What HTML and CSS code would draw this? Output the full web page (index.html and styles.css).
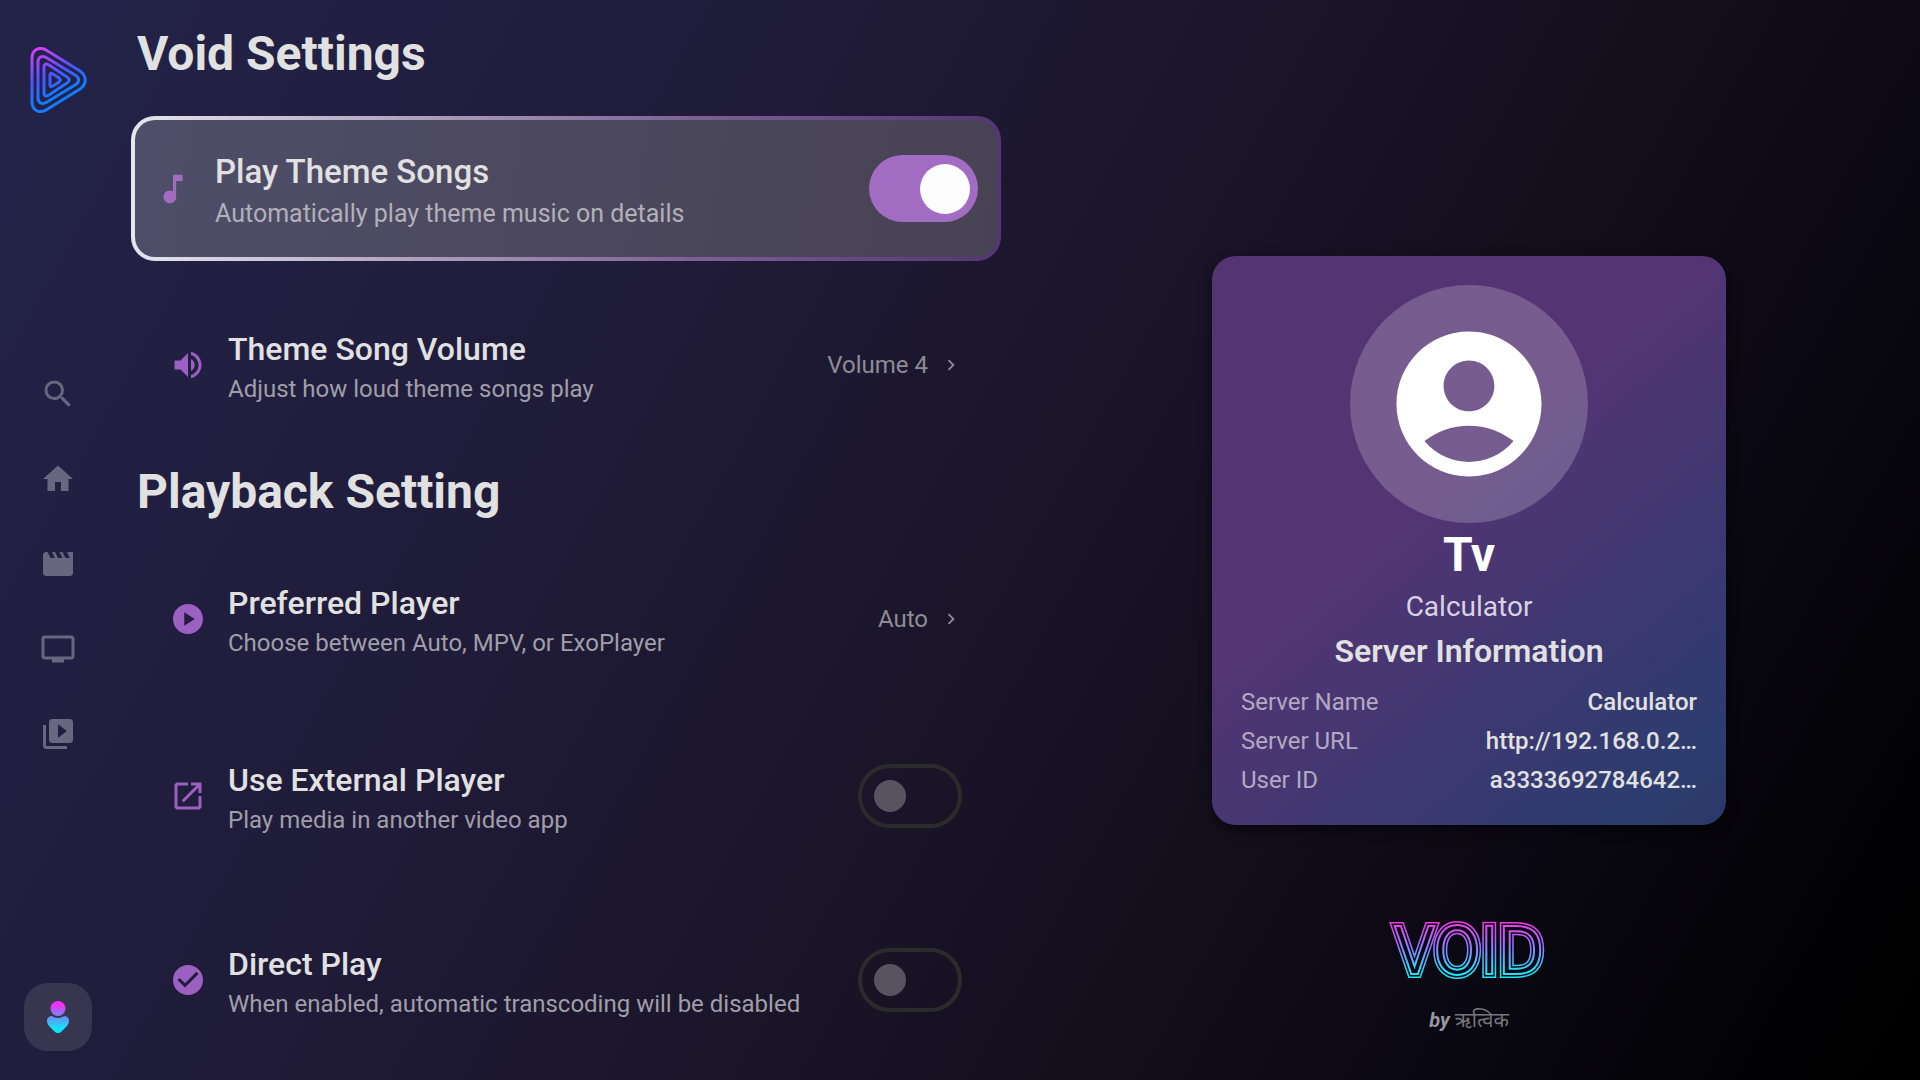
FILE: index.html
```
<!DOCTYPE html>
<html lang="en">
<head>
  <meta charset="UTF-8">
  <meta name="viewport" content="width=device-width, initial-scale=1">
  <title>Void Settings</title>
  <link rel="stylesheet" href="styles.css">
</head>
<body>
  <div class="app">
    <!-- Navigation rail -->
    <aside class="sidebar">
      <svg class="logo" viewBox="0 0 57 66" fill="none" stroke="url(#logoGradient)" stroke-width="3" stroke-linejoin="round">
        <defs>
          <linearGradient id="logoGradient" gradientUnits="userSpaceOnUse" x1="8" y1="2" x2="28" y2="48">
            <stop offset="0" stop-color="#d63df5"/>
            <stop offset="0.6" stop-color="#4a56ff"/>
            <stop offset="1" stop-color="#127cff"/>
          </linearGradient>
        </defs>
        <path d="M2 11C2 3 9 -1 16 3L50 24C57 29 57 37 50 42L16 63C9 67 2 63 2 55Z"/>
        <path d="M8 15C8 10 12 8 17 11L45 28C50 31 50 35 45 38L17 55C12 58 8 56 8 51Z"/>
        <path d="M14 20C14 17 16 16 19 18L37 30C40 32 40 34 37 36L19 48C16 50 14 49 14 46Z"/>
        <path d="M20 28C20 26 21 26 23 27L29 31C31 33 31 33 29 35L23 39C21 40 20 40 20 38Z"/>
      </svg>
      <nav class="nav">
        <button type="button" aria-label="Search"><svg viewBox="0 0 24 24"><path d="M15.5 14h-.79l-.28-.27A6.471 6.471 0 0 0 16 9.5 6.5 6.5 0 1 0 9.5 16c1.61 0 3.09-.59 4.23-1.57l.27.28v.79l5 4.99L20.49 19l-4.99-5zm-6 0C7.01 14 5 11.99 5 9.5S7.01 5 9.5 5 14 7.01 14 9.5 11.99 14 9.5 14z"/></svg></button>
        <button type="button" aria-label="Home"><svg viewBox="0 0 24 24"><path d="M10 20v-6h4v6h5v-8h3L12 3 2 12h3v8z"/></svg></button>
        <button type="button" aria-label="Movies"><svg viewBox="0 0 24 24"><path d="M18 4l2 4h-3l-2-4h-2l2 4h-3l-2-4H8l2 4H7L5 4H4c-1.1 0-1.99.9-1.99 2L2 18c0 1.1.9 2 2 2h16c1.100 0 2-.9 2-2V4h-4z"/></svg></button>
        <button type="button" aria-label="TV shows"><svg viewBox="0 0 24 24"><path d="M21 3H3c-1.100 0-2 .9-2 2v12c0 1.100.9 2 2 2h5v2h8v-2h5c1.100 0 1.990-.9 1.990-2L23 5c0-1.100-.9-2-2-2zm0 14H3V5h18v12z"/></svg></button>
        <button type="button" aria-label="Library"><svg viewBox="0 0 24 24"><path d="M4 6H2v14c0 1.100.9 2 2 2h14v-2H4V6zm16-4H8c-1.100 0-2 .9-2 2v12c0 1.100.9 2 2 2h12c1.100 0 2-.9 2-2V4c0-1.100-.9-2-2-2zm-8 12.500v-9l6 4.500-6 4.500z"/></svg></button>
      </nav>
      <button class="avatar" type="button" aria-label="Profile">
        <svg viewBox="0 0 22 32">
          <defs>
            <linearGradient id="avatarGradient" gradientUnits="userSpaceOnUse" x1="0" y1="0" x2="0" y2="32">
              <stop offset="0.1" stop-color="#f52df5"/>
              <stop offset="0.5" stop-color="#6a90f5"/>
              <stop offset="0.85" stop-color="#0fe4fa"/>
            </linearGradient>
          </defs>
          <g fill="url(#avatarGradient)">
            <circle cx="11" cy="7.500" r="7.500"/>
            <path d="M5 15C8 17.500 14 17.500 17 15C20 15 22 17 22 20C22 22 21 24 19 26L14 31C12 32.400 10 32.400 8 31L3 26C1 24 0 22 0 20C0 17 2 15 5 15Z"/>
          </g>
        </svg>
      </button>
    </aside>

    <!-- Settings list -->
    <main class="settings">
      <h1>Void Settings</h1>
      <div class="rows">
        <label class="row focused">
          <svg class="icon" viewBox="0 0 24 24"><path d="M12 3v10.550c-.59-.34-1.270-.55-2-.55-2.210 0-4 1.790-4 4s1.790 4 4 4 4-1.790 4-4V7h4V3h-6z"/></svg>
          <span class="text">
            <span class="title">Play Theme Songs</span>
            <span class="sub">Automatically play theme music on details</span>
          </span>
          <input class="switch" type="checkbox" checked>
        </label>
        <button class="row link" type="button">
          <svg class="icon" viewBox="0 0 24 24"><path d="M3 9v6h4l5 5V4L7 9H3zm13.500 3c0-1.770-1.020-3.290-2.500-4.030v8.050c1.480-.73 2.500-2.250 2.500-4.020zM14 3.230v2.060c2.890.86 5 3.540 5 6.710s-2.110 5.850-5 6.710v2.060c4.010-.91 7-4.490 7-8.770s-2.990-7.860-7-8.770z"/></svg>
          <span class="text">
            <span class="title">Theme Song Volume</span>
            <span class="sub">Adjust how loud theme songs play</span>
          </span>
          <span class="value">Volume 4</span>
          <svg class="chevron" viewBox="0 0 24 24"><path d="M8.590 16.590L13.170 12 8.590 7.410 10 6l6 6-6 6z"/></svg>
        </button>
      </div>

      <h2>Playback Setting</h2>
      <div class="rows">
        <button class="row link" type="button">
          <svg class="icon" viewBox="0 0 24 24"><path d="M12 2C6.480 2 2 6.480 2 12s4.480 10 10 10 10-4.480 10-10S17.520 2 12 2zm-2.500 14.500v-9l7 4.500-7 4.500z"/></svg>
          <span class="text">
            <span class="title">Preferred Player</span>
            <span class="sub">Choose between Auto, MPV, or ExoPlayer</span>
          </span>
          <span class="value">Auto</span>
          <svg class="chevron" viewBox="0 0 24 24"><path d="M8.590 16.590L13.170 12 8.590 7.410 10 6l6 6-6 6z"/></svg>
        </button>
        <label class="row">
          <svg class="icon" viewBox="0 0 24 24"><path d="M19 19H5V5h7V3H5c-1.110 0-2 .9-2 2v14c0 1.100.89 2 2 2h14c1.100 0 2-.9 2-2v-7h-2v7zM14 3v2h3.590l-9.830 9.830 1.410 1.410L19 6.410V10h2V3h-7z"/></svg>
          <span class="text">
            <span class="title">Use External Player</span>
            <span class="sub">Play media in another video app</span>
          </span>
          <input class="switch" type="checkbox">
        </label>
        <label class="row">
          <svg class="icon" viewBox="0 0 24 24"><path d="M12 2C6.480 2 2 6.480 2 12s4.480 10 10 10 10-4.480 10-10S17.520 2 12 2zm-2 15l-5-5 1.410-1.410L10 14.170l7.590-7.590L19 8l-9 9z"/></svg>
          <span class="text">
            <span class="title">Direct Play</span>
            <span class="sub">When enabled, automatic transcoding will be disabled</span>
          </span>
          <input class="switch" type="checkbox">
        </label>
      </div>
    </main>

    <!-- Profile and server card -->
    <section class="panel">
      <div class="card">
        <div class="portrait">
          <svg viewBox="0 0 24 24"><path d="M12 2C6.480 2 2 6.480 2 12s4.480 10 10 10 10-4.480 10-10S17.520 2 12 2zm0 4c1.930 0 3.500 1.570 3.500 3.500S13.930 13 12 13s-3.500-1.570-3.500-3.500S10.070 6 12 6zm0 14c-2.030 0-4.430-.82-6.140-2.880C7.550 15.800 9.680 15 12 15s4.450.8 6.140 2.120C16.430 19.180 14.030 20 12 20z"/></svg>
        </div>
        <div class="user">Tv</div>
        <div class="server">Calculator</div>
        <h3>Server Information</h3>
        <dl class="info">
          <div><dt>Server Name</dt><dd>Calculator</dd></div>
          <div><dt>Server URL</dt><dd>http://192.168.0.2…</dd></div>
          <div><dt>User ID</dt><dd>a3333692784642…</dd></div>
        </dl>
      </div>
      <div class="brand">
        <svg class="wordmark" viewBox="0 0 180 100" role="img" aria-label="VOID">
          <defs>
            <linearGradient id="voidGradient" gradientUnits="userSpaceOnUse" x1="0" y1="22" x2="0" y2="80">
              <stop offset="0" stop-color="#fa35e0"/>
              <stop offset="0.45" stop-color="#9278ff"/>
              <stop offset="0.9" stop-color="#1ee4fa"/>
            </linearGradient>
          </defs>
          <!-- Stacked strokes leave thin concentric lines -->
          <g text-anchor="middle">
            <text class="line outer" x="90" y="76">VOID</text>
            <text class="line gap" x="90" y="76">VOID</text>
            <text class="line inner" x="90" y="76">VOID</text>
          </g>
        </svg>
        <p class="byline">by <span>ऋत्विक</span></p>
      </div>
    </section>
  </div>
</body>
</html>
```
FILE: styles.css
```
* {
  box-sizing: border-box;
}

body {
  margin: 0;
  font-family: Roboto, "Noto Sans", sans-serif;
  font-size: 24px;
  line-height: 32px;
  color: #e1e1e1;
  background: #000;
}

button {
  font: inherit;
  color: inherit;
  background: none;
  border: none;
  padding: 0;
  cursor: pointer;
}

svg {
  display: block;
  fill: currentColor;
}

h1, h2, h3, p, dl, dd {
  margin: 0;
}

.app {
  display: grid;
  grid-template-columns: 116px 1fr 1fr;
  min-height: 100vh;
  background: linear-gradient(119deg, #23234a 0%, #1f1b38 34%, #1a1529 52%, #120e1b 68%, #0a0812 80%, #040307 90%, #000 98%);
}

/* Sidebar */
.sidebar {
  display: flex;
  flex-direction: column;
  align-items: center;
  padding: 47px 0 29px;
}

.logo {
  width: 57px;
  height: 66px;
  fill: none;
}

.nav {
  flex: 1;
  display: flex;
  flex-direction: column;
  justify-content: center;
  padding-top: 32px;
}

.nav button {
  height: 85px;
  color: #69667f;
}

.nav svg {
  width: 36px;
  height: 36px;
}

.avatar {
  display: flex;
  align-items: center;
  justify-content: center;
  width: 68px;
  height: 68px;
  border-radius: 24px;
  background: #383551;
}

.avatar svg {
  width: 22px;
  height: 32px;
}

/* Settings */
.settings {
  padding: 22px 21px 0;
}

h1, h2 {
  font-size: 48px;
  line-height: 64px;
  font-weight: 700;
}

h2 {
  margin-top: 32px;
}

.rows {
  display: flex;
  flex-direction: column;
  gap: 44px;
  padding: 32px 11px 0 9px;
}

.row {
  display: flex;
  align-items: center;
  width: 100%;
  min-height: 140px;
  padding: 0 24px;
  text-align: left;
}

.row.link {
  min-height: 126px;
}

.icon {
  width: 36px;
  height: 36px;
  margin-right: 22px;
  color: #9c5fc2;
  flex: none;
}

.text {
  flex: 1;
  min-width: 0;
}

.title {
  display: block;
  font-size: 32px;
  line-height: 48px;
  font-weight: 500;
}

.sub {
  display: block;
  color: #a09ea9;
  white-space: nowrap;
}

.value {
  color: #8e8b97;
}

.chevron {
  width: 22px;
  height: 22px;
  margin-left: 12px;
  color: #8e8b97;
}

.switch {
  appearance: none;
  flex: none;
  display: flex;
  align-items: center;
  width: 104px;
  height: 64px;
  margin: 0;
  padding: 0 12px;
  border: 4px solid #2b2b2b;
  border-radius: 32px;
}

.switch::before {
  content: "";
  width: 32px;
  height: 32px;
  border-radius: 50%;
  background: #575361;
}

.switch:checked {
  justify-content: flex-end;
  width: 109px;
  height: 67px;
  padding: 0 8px;
  border: none;
  border-radius: 34px;
  background: #a16cc2;
}

.switch:checked::before {
  width: 50px;
  height: 50px;
  background: #fdfdfd;
}

/* The focused row grows a little past its neighbours */
.row.focused {
  width: auto;
  min-height: 145px;
  margin: -2px -15px -3px;
  padding: 0 19px;
  border: 4px solid transparent;
  border-radius: 24px;
  background:
    linear-gradient(100deg, #4e4e6a, #4c485e 50%, #474353) padding-box,
    linear-gradient(90deg, #e6e6ee, #aa9bb8 35%, #7b6095 65%, #543575) border-box;
}

.focused .icon {
  width: 38px;
  height: 38px;
  margin-right: 23px;
  color: #a16cc2;
}

.focused .title {
  font-size: 33px;
  line-height: 50px;
}

.focused .sub {
  font-size: 25px;
  line-height: 33px;
  color: #b2b0b9;
}

/* Profile panel */
.panel {
  display: grid;
  grid-template-rows: 1fr auto 1fr;
  justify-items: center;
}

.card {
  grid-row: 2;
  width: 57%;
  padding: 29px;
  border-radius: 24px;
  text-align: center;
  background: linear-gradient(140deg, #553474 0%, #553474 40%, #3c3871 70%, #2b3d6e 92%, #2d3768 100%);
  box-shadow: 0 4px 12px rgba(0, 0, 0, 0.6);
}

.portrait {
  display: flex;
  align-items: center;
  justify-content: center;
  width: 238px;
  height: 238px;
  margin: 0 auto;
  border-radius: 50%;
  background: rgba(255, 255, 255, 0.2);
  color: #fff;
}

.portrait svg {
  width: 174px;
  height: 174px;
}

.user {
  font-size: 48px;
  line-height: 64px;
  font-weight: 700;
  color: #fff;
}

.server {
  font-size: 28px;
  line-height: 40px;
  color: #d9d2e2;
}

h3 {
  font-size: 32px;
  line-height: 48px;
  font-weight: 600;
}

.info {
  display: flex;
  flex-direction: column;
  gap: 7px;
  margin-top: 11px;
}

.info div {
  display: grid;
  grid-template-columns: 1fr 1fr;
}

.info dt {
  text-align: left;
  color: #b3a9c2;
}

.info dd {
  text-align: right;
  font-weight: 500;
  white-space: nowrap;
}

/* Brand */
.brand {
  display: flex;
  flex-direction: column;
  align-items: center;
  grid-row: 3;
  align-self: center;
  padding-top: 28px;
}

.wordmark {
  width: 180px;
  height: 100px;
}

.line {
  font-family: "Liberation Sans Narrow", "DejaVu Sans Condensed", sans-serif;
  font-size: 66px;
  font-weight: 400;
  fill: #0a0812;
  stroke: url(#voidGradient);
}

.outer {
  stroke-width: 8px;
}

.gap {
  stroke: #0a0812;
  stroke-width: 5px;
}

.inner {
  stroke-width: 2px;
}

.byline {
  margin-top: 8px;
  font-size: 20px;
  line-height: 28px;
  font-weight: 700;
  font-style: italic;
  color: #98969c;
}

.byline span {
  font-weight: 400;
  color: #77757b;
}
```
